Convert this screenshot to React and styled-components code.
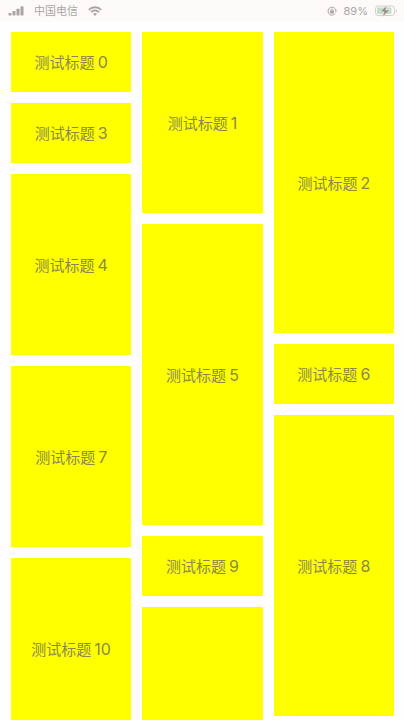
import React from "react";
import styled, { createGlobalStyle } from "styled-components";

const GlobalStyle = createGlobalStyle`
  * { box-sizing: border-box; }
  html, body, #root { height: 100%; }
  body {
    margin: 0;
    overflow: hidden;
    background: #fefefe;
    font-family: Inter, "Noto Sans CJK SC", sans-serif;
  }
`;

const Screen = styled.div`
  height: 100%;
  display: flex;
  flex-direction: column;
  overflow: hidden;
`;

const StatusBar = styled.header`
  flex: none;
  height: 22px;
  padding: 0 6px 0 8px;
  display: flex;
  align-items: center;
  justify-content: space-between;
  background: #fffafa;
  color: #aaa5a2;
  font-size: 11px;
  line-height: 22px;
`;

const StatusGroup = styled.div`
  display: flex;
  align-items: center;
  gap: ${(p) => p.$gap}px;

  svg { display: block; }
`;

const Waterfall = styled.main`
  flex: 1;
  min-height: 0;
  display: grid;
  grid-template-columns: repeat(3, 1fr);
  gap: 11px;
  padding: 10px 10px 0 11px;
`;

const Column = styled.div`
  display: flex;
  flex-direction: column;
  gap: 11px;
`;

const heights = { small: 60, medium: 181, large: 301 };

const Tile = styled.article`
  flex: none;
  height: ${(p) => heights[p.$size]}px;
  padding-top: 1px;
  display: flex;
  align-items: center;
  justify-content: center;
  background: #ffff00;
  color: #8a8a48;
  font-size: 15px;
  line-height: 20px;
  white-space: nowrap;
`;

const TileNumber = styled.span`
  margin-left: 3px;
  font-size: 16px;
`;

const columns = [
  [[0, "small"], [3, "small"], [4, "medium"], [7, "medium"], [10, "medium"]],
  [[1, "medium"], [5, "large"], [9, "small"], [11, "large"]],
  [[2, "large"], [6, "small"], [8, "large"]],
];

const SignalIcon = () => (
  <svg width="16" height="10" viewBox="0 0 16 10" fill="#aaa5a0" aria-hidden="true">
    <rect x="0.5" y="7" width="3" height="2.5" rx="0.4" />
    <rect x="4.5" y="5" width="3" height="4.5" rx="0.4" />
    <rect x="8.5" y="2.8" width="3" height="6.7" rx="0.4" />
    <rect x="12.5" y="0.2" width="3" height="9.3" rx="0.4" />
  </svg>
);

const WifiIcon = () => (
  <svg width="14" height="10" viewBox="0 0 14 10" fill="none" stroke="#aaa5a0" strokeWidth="1.9" aria-hidden="true">
    <path d="M0.8 3.8C4.2 0.4 9.8 0.4 13.2 3.8" />
    <path d="M3 6.1C5.3 3.9 8.7 3.9 11 6.1" />
    <path d="M7 9.9 4.9 7.8C6.1 6.7 7.9 6.7 9.1 7.8Z" fill="#aaa5a0" stroke="none" />
  </svg>
);

const RotationLockIcon = () => (
  <svg width="10" height="10" viewBox="0 0 10 10" fill="none" stroke="#aaa5a2" aria-hidden="true">
    <path d="M8.4 7.3A4 4 0 1 1 9 4.8" strokeWidth="1" />
    <path d="M7.8 4.4H10L8.9 6.2Z" fill="#aaa5a2" stroke="none" />
    <rect x="3.1" y="4.6" width="3.8" height="2.8" rx="0.4" fill="#aaa5a2" stroke="none" />
    <path d="M3.9 4.8V3.9a1.1 1.1 0 0 1 2.2 0v0.9" strokeWidth="0.7" />
  </svg>
);

const BatteryIcon = () => (
  <svg width="23" height="12" viewBox="0 0 23 12" aria-hidden="true">
    <rect x="0.5" y="1" width="19" height="9.5" rx="2.8" fill="none" stroke="#d2ceca" />
    <rect x="2" y="2.5" width="14.5" height="6.5" rx="1.4" fill="#c5dfc4" />
    <path d="M21 4.2c1.4 0.6 1.4 3 0 3.6Z" fill="#d2ceca" />
    <path d="M12.2 0 5 6.8h4L7.4 12l7.6-7h-4.2Z" fill="#96918e" stroke="#fffafa" strokeWidth="0.5" />
  </svg>
);

export default function App() {
  return (
    <>
      <GlobalStyle />
      <Screen>
        <StatusBar>
          <StatusGroup $gap={10}>
            <SignalIcon />
            <span>中国电信</span>
            <WifiIcon />
          </StatusGroup>
          <StatusGroup $gap={7}>
            <RotationLockIcon />
            <span>89%</span>
            <BatteryIcon />
          </StatusGroup>
        </StatusBar>
        <Waterfall>
          {columns.map((tiles, i) => (
            <Column key={i}>
              {tiles.map(([n, size]) => (
                <Tile key={n} $size={size}>
                  {n < 11 && (
                    <div>
                      测试标题<TileNumber>{n}</TileNumber>
                    </div>
                  )}
                </Tile>
              ))}
            </Column>
          ))}
        </Waterfall>
      </Screen>
    </>
  );
}
